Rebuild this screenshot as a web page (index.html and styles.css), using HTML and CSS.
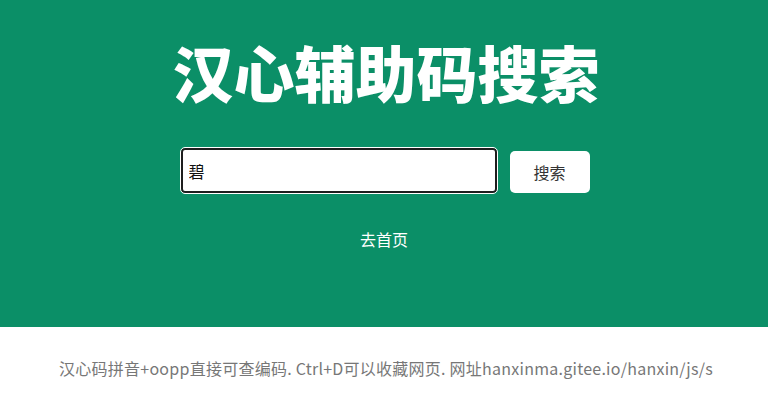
FILE: index.html
```html
<!DOCTYPE html>
<html lang="zh-CN">
<head>
<meta charset="utf-8">
<title>汉心辅助码搜索</title>
<link rel="stylesheet" href="styles.css">
</head>
<body>
<header class="hero">
  <h1 class="title">汉心辅助码搜索</h1>
  <form class="search">
    <input class="search-input" type="text" value="碧">
    <button class="search-btn" type="button">搜索</button>
  </form>
  <a class="home-link" href="#">去首页</a>
</header>
<footer class="foot">
  <p class="foot-text">汉心码拼音+oopp直接可查编码. Ctrl+D可以收藏网页. 网址hanxinma.gitee.io/hanxin/js/s</p>
</footer>
</body>
</html>
```
FILE: styles.css
```css
html, body {
  margin: 0;
  padding: 0;
  background: #ffffff;
  font-family: "Noto Sans CJK SC", "Noto Sans", sans-serif;
}
.hero {
  background: #0b8f67;
  height: 327px;
  display: flex;
  flex-direction: column;
  align-items: center;
  box-sizing: border-box;
  padding-top: 34px;
}
.title {
  margin: 0 0 0 4px;
  color: #ffffff;
  font-size: 61px;
  font-weight: 900;
  line-height: 76px;
  letter-spacing: 0;
}
.search {
  margin-top: 38px;
  display: flex;
  align-items: center;
  gap: 13px;
  margin-left: 2px;
}
.search-input {
  box-sizing: border-box;
  width: 316px;
  height: 45px;
  border: 2px solid #1e1e1e;
  border-radius: 4px;
  outline: 1px solid #ffffff;
  padding: 0 6px;
  font-family: "Noto Sans CJK SC", sans-serif;
  font-size: 16px;
  color: #111;
  background: #fff;
}
.search-btn {
  box-sizing: border-box;
  width: 80px;
  height: 42px;
  margin-top: 3px;
  border: none;
  border-radius: 5px;
  background: #ffffff;
  font-family: "Noto Sans CJK SC", sans-serif;
  font-size: 16px;
  color: #333;
}
.home-link {
  margin-top: 36px;
  color: #ffffff;
  font-size: 16px;
  text-decoration: none;
  line-height: 20px;
}
.foot {
  display: flex;
  justify-content: center;
  padding-top: 29px;
}
.foot-text {
  margin: 0 0 0 4px;
  color: #777777;
  font-size: 16px;
  line-height: 24px;
  letter-spacing: 0.25px;
}
```
